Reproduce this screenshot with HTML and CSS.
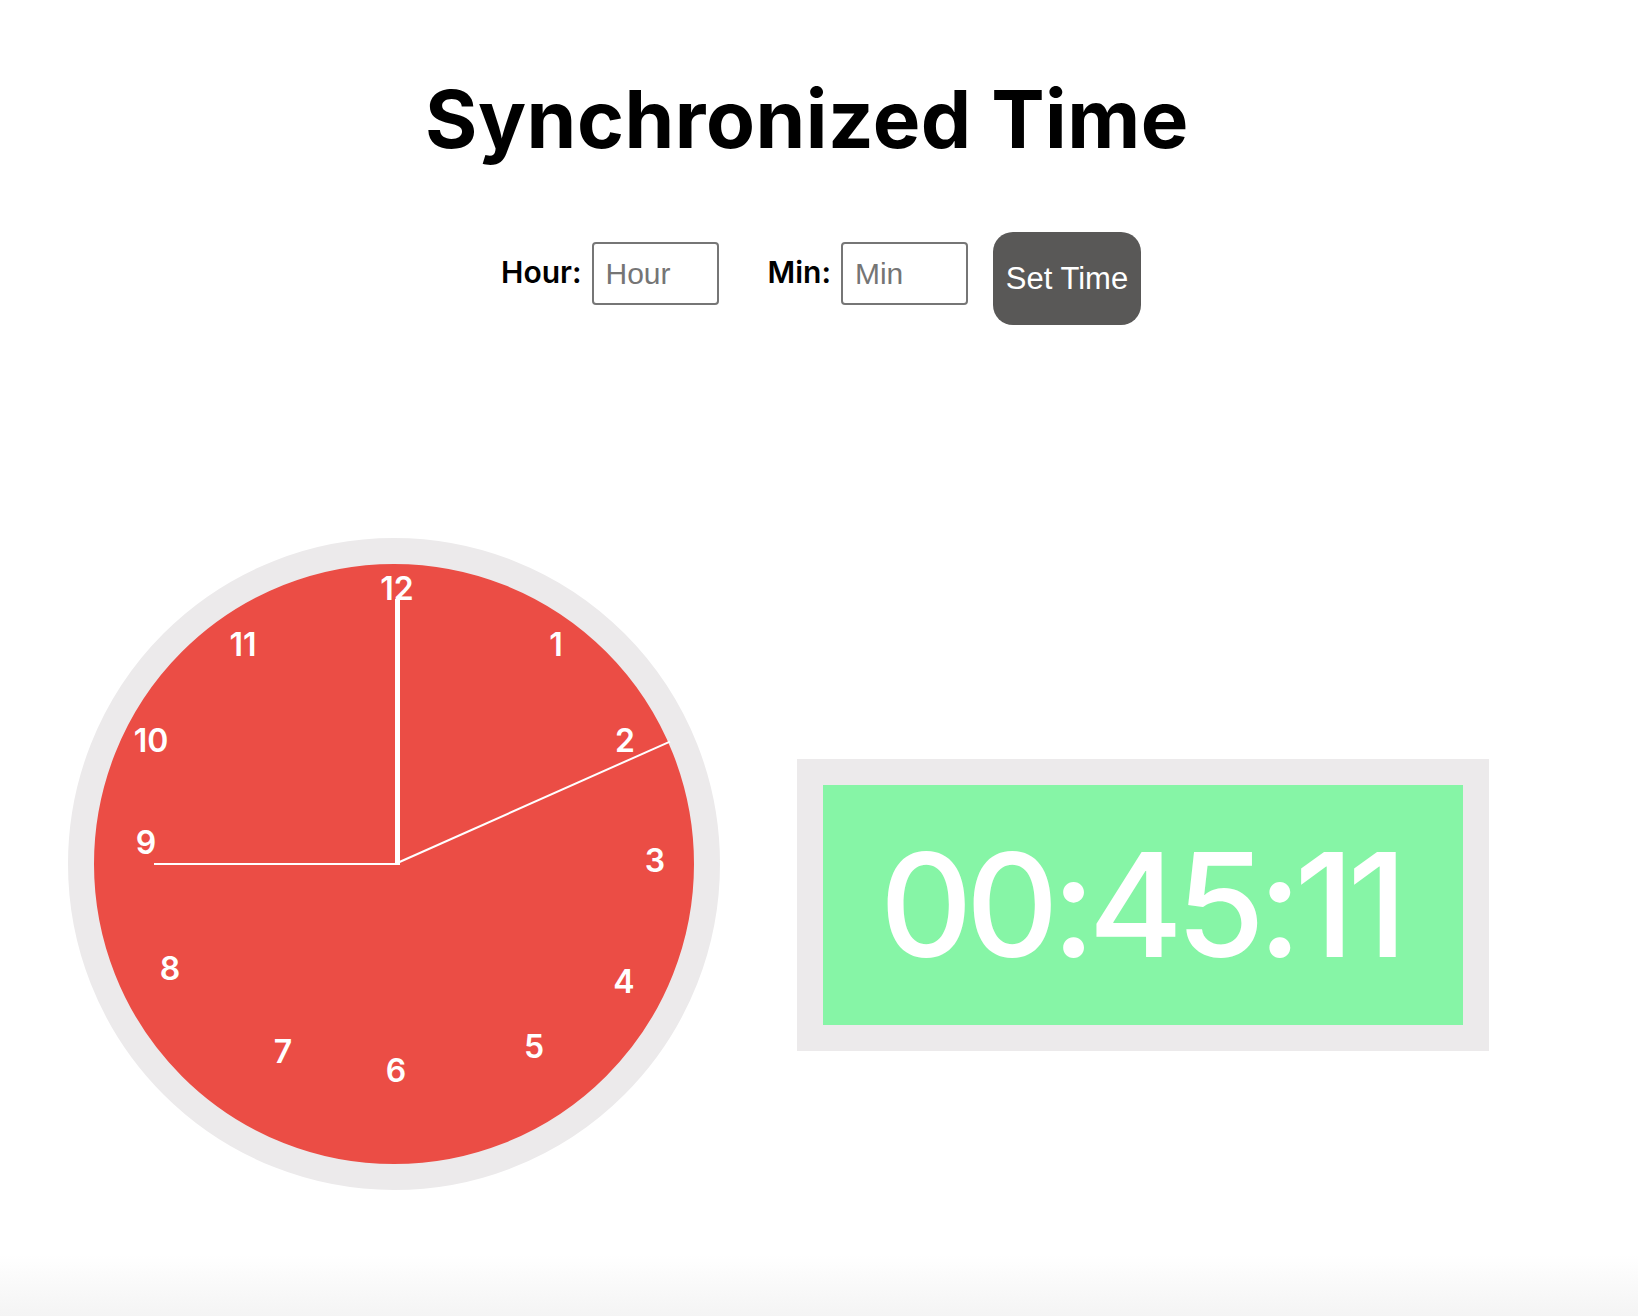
FILE: index.html
```html
<!DOCTYPE html>
<html lang="en">
<head>
<meta charset="utf-8">
<title>Synchronized Time</title>
<link rel="stylesheet" href="styles.css">
</head>
<body>
<h1 class="title">Synchronized Time</h1>
<div class="controls">
  <label class="ctl-label" for="hour">Hour:</label>
  <input class="ctl-input ctl-input--hour" id="hour" type="text" placeholder="Hour">
  <label class="ctl-label" for="min">Min:</label>
  <input class="ctl-input" id="min" type="text" placeholder="Min">
  <button class="set-btn" type="button">Set Time</button>
</div>
<div class="clocks">
  <div class="analog">
    <div class="face">
      <span class="num n12">12</span>
      <span class="num n1">1</span>
      <span class="num n2">2</span>
      <span class="num n3">3</span>
      <span class="num n4">4</span>
      <span class="num n5">5</span>
      <span class="num n6">6</span>
      <span class="num n7">7</span>
      <span class="num n8">8</span>
      <span class="num n9">9</span>
      <span class="num n10">10</span>
      <span class="num n11">11</span>
      <div class="hand hand--hour"></div>
      <div class="hand hand--min"></div>
      <div class="hand hand--sec"></div>
    </div>
  </div>
  <div class="digital">
    <div class="digital-face">00:45:11</div>
  </div>
</div>
</body>
</html>
```
FILE: styles.css
```css
html {
  background: linear-gradient(to bottom, #ffffff 0, #ffffff 1255px, #f4f4f4 1316px);
  min-height: 100%;
}
body {
  margin: 0;
  font-family: "Inter", "Liberation Sans", sans-serif;
  color: #000;
  min-height: 1316px;
}
.title {
  margin: 0;
  padding-top: 79px;
  padding-right: 24px;
  font-size: 80px;
  line-height: 80px;
  font-weight: 700;
  text-align: center;
  letter-spacing: 0.5px;
}
.controls {
  margin-top: 73px;
  padding-left: 4px;
  display: flex;
  justify-content: center;
  align-items: flex-start;
  height: 93px;
}
.ctl-label {
  margin-top: 25px;
  font-size: 30px;
  line-height: 30px;
  font-weight: 600;
  margin-right: 10px;
}
.ctl-input {
  box-sizing: border-box;
  margin: 10px 0 0 0;
  width: 127px;
  height: 63px;
  border: 2px solid #767676;
  border-radius: 4px;
  padding: 0 12px;
  font-family: "Liberation Sans", Arial, sans-serif;
  font-size: 30px;
  color: #000;
  background: #fff;
  outline: none;
}
.ctl-input::placeholder {
  color: #757575;
}
.ctl-input--hour {
  margin-right: 49px;
}
.set-btn {
  margin-left: 25px;
  box-sizing: border-box;
  width: 148px;
  height: 93px;
  border: none;
  border-radius: 20px;
  background: #595857;
  color: #fff;
  font-family: "Liberation Sans", Arial, sans-serif;
  font-size: 31px;
  padding: 0;
}
.clocks {
  margin-top: 213px;
  display: flex;
  align-items: flex-start;
  padding-left: 68px;
  gap: 77px;
}
.analog {
  width: 600px;
  height: 600px;
  border: 26px solid #eceaeb;
  border-radius: 50%;
  background: #eb4d45;
  flex: none;
}
.face {
  position: relative;
  width: 600px;
  height: 600px;
}
.num {
  position: absolute;
  transform: translate(-50%, -50%);
  color: #fff;
  font-size: 32px;
  line-height: 32px;
  font-weight: 600;
}
.n12 { left: 303px; top: 25px; }
.n1  { left: 462px; top: 81px; }
.n2  { left: 531px; top: 177px; }
.n3  { left: 561px; top: 297px; }
.n4  { left: 530px; top: 418px; }
.n5  { left: 440px; top: 483px; }
.n6  { left: 302px; top: 507px; }
.n7  { left: 189px; top: 488px; }
.n8  { left: 76px;  top: 405px; }
.n9  { left: 52px;  top: 279px; }
.n10 { left: 57px;  top: 177px; }
.n11 { left: 149px; top: 81px; }
.hand {
  position: absolute;
  background: #fff;
}
.hand--hour {
  left: 301px;
  top: 35px;
  width: 5px;
  height: 266px;
}
.hand--min {
  left: 60px;
  top: 299px;
  width: 241px;
  height: 2px;
}
.hand--sec {
  left: 300px;
  top: -1px;
  width: 2px;
  height: 301px;
  transform-origin: 50% 100%;
  transform: rotate(66deg);
}
.digital {
  margin-top: 221px;
  width: 640px;
  height: 240px;
  border: 26px solid #eceaeb;
  background: #86f5a6;
  flex: none;
  display: flex;
  align-items: center;
  justify-content: center;
}
.digital-face {
  color: #fff;
  font-size: 144px;
  line-height: 144px;
  font-weight: 500;
  letter-spacing: -7px;
  padding-right: 6px;
}
```
